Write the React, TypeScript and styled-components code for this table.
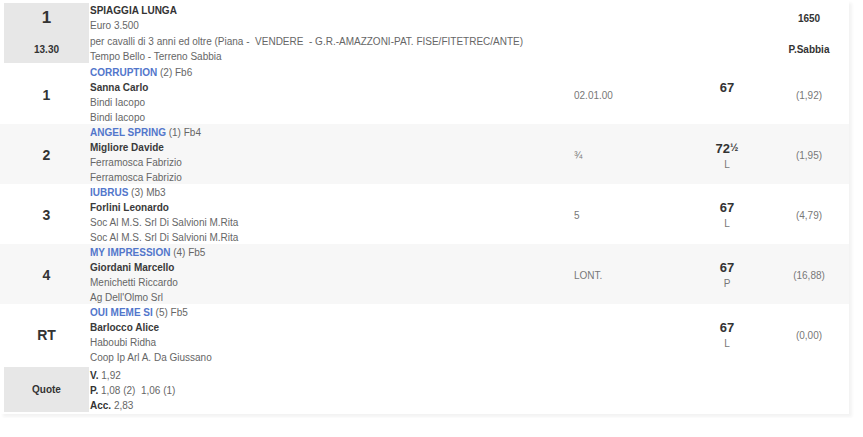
import styled, { createGlobalStyle } from "styled-components";

type Runner = {
    pos: string;
    horse: string;
    draw: number;
    stable: string;
    jockey: string;
    trainer: string;
    owner: string;
    gap: string;
    weight: string;
    half?: boolean;
    tag?: string;
    odds: string;
};

const runners: Runner[] = [
    { pos: "1", horse: "CORRUPTION", draw: 2, stable: "Fb6", jockey: "Sanna Carlo", trainer: "Bindi Iacopo", owner: "Bindi Iacopo", gap: "02.01.00", weight: "67", odds: "(1,92)" },
    { pos: "2", horse: "ANGEL SPRING", draw: 1, stable: "Fb4", jockey: "Migliore Davide", trainer: "Ferramosca Fabrizio", owner: "Ferramosca Fabrizio", gap: "¾", weight: "72", half: true, tag: "L", odds: "(1,95)" },
    { pos: "3", horse: "IUBRUS", draw: 3, stable: "Mb3", jockey: "Forlini Leonardo", trainer: "Soc Al M.S. Srl Di Salvioni M.Rita", owner: "Soc Al M.S. Srl Di Salvioni M.Rita", gap: "5", weight: "67", tag: "L", odds: "(4,79)" },
    { pos: "4", horse: "MY IMPRESSION", draw: 4, stable: "Fb5", jockey: "Giordani Marcello", trainer: "Menichetti Riccardo", owner: "Ag Dell'Olmo Srl", gap: "LONT.", weight: "67", tag: "P", odds: "(16,88)" },
    { pos: "RT", horse: "OUI MEME SI", draw: 5, stable: "Fb5", jockey: "Barlocco Alice", trainer: "Haboubi Ridha", owner: "Coop Ip Arl A. Da Giussano", gap: "", weight: "67", tag: "L", odds: "(0,00)" },
];

const GlobalStyle = createGlobalStyle`
    body {
        margin: 0;
        background: #fff;
        font-family: "Liberation Sans", Arial, sans-serif;
    }
`;

const Board = styled.div`
    width: 849px;
    background: #fff;
    box-shadow: 3px 3px 3px rgba(0, 0, 0, 0.05);
    margin-bottom: 4px;
`;

const Row = styled.div<{ $shade?: boolean }>`
    display: grid;
    grid-template-columns: 85px 485px 110px 86px 78px;
    padding-left: 4px;
    background: ${props => (props.$shade ? "#f7f7f7" : "#fff")};
`;

const HeadRow = styled(Row)`
    height: 64px;
    padding-top: 3px;
    box-sizing: border-box;
`;

const RunnerRow = styled(Row)`
    height: 60px;
    padding-top: 1px;
    box-sizing: border-box;
`;

const QuoteRow = styled(Row)`
    height: 50px;
    padding-top: 3px;
    box-sizing: border-box;
`;

const Stack = styled.div<{ $grey?: boolean }>`
    background: ${props => (props.$grey ? "#e7e7e7" : "transparent")};
    display: flex;
    flex-direction: column;
    align-items: center;
    padding-top: 10px;
    gap: 19px;
    margin-bottom: 1px;
`;

const QuoteCell = styled.div`
    background: #e7e7e7;
    display: flex;
    align-items: center;
    justify-content: center;
    margin-bottom: 2px;
`;

const Big = styled.div<{ $size: number }>`
    font-size: ${props => props.$size}px;
    font-weight: bold;
    color: #333;
`;

const HeadNum = styled.div`
    font-size: 17px;
    font-weight: bold;
    color: #333;
    line-height: 20px;
    margin: -5px 0 -3px;
`;

const Small = styled.div`
    font-size: 10px;
    line-height: 12px;
    font-weight: bold;
    color: #333;
`;

const Lines = styled.div`
    font-size: 10px;
    line-height: 15px;
    color: #666;
    padding-left: 1px;
    white-space: nowrap;
`;

const HeadLines = styled(Lines)`
    grid-column: 2 / 5;
    line-height: 15.3px;
`;

const QuoteLines = styled(Lines)`
    padding-top: 1px;
`;

const Title = styled.div`
    font-weight: bold;
    color: #333;
`;

const Horse = styled.span`
    color: #5276cb;
    font-weight: bold;
`;

const Strong = styled.div`
    font-weight: bold;
    color: #3a3a3a;
`;

const Label = styled.b`
    color: #333;
`;

const PosCell = styled.div`
    display: flex;
    align-items: center;
    justify-content: center;
`;

const GapCell = styled.div`
    display: flex;
    align-items: center;
    font-size: 10px;
    color: #777;
`;

const WeightCell = styled.div`
    display: flex;
    flex-direction: column;
    align-items: center;
    padding-top: 15px;
`;

const Weight = styled.div`
    font-size: 13px;
    font-weight: bold;
    color: #333;
    line-height: 16px;

    sup {
        font-size: 10px;
        vertical-align: 2px;
    }
`;

const Tag = styled.div`
    font-size: 10px;
    color: #777;
    line-height: 16px;
`;

const OddsCell = styled.div`
    display: flex;
    align-items: center;
    justify-content: center;
    font-size: 10px;
    color: #777;
`;

function App() {
    return (
        <>
            <GlobalStyle />
            <Board>
                <HeadRow>
                    <Stack $grey>
                        <HeadNum>1</HeadNum>
                        <Small>13.30</Small>
                    </Stack>
                    <HeadLines>
                        <Title>SPIAGGIA LUNGA</Title>
                        <div>Euro 3.500</div>
                        <div>per cavalli di 3 anni ed oltre (Piana - &nbsp;VENDERE &nbsp;- G.R.-AMAZZONI-PAT. FISE/FITETREC/ANTE)</div>
                        <div>Tempo Bello - Terreno Sabbia</div>
                    </HeadLines>
                    <Stack>
                        <Small>1650</Small>
                        <Small>P.Sabbia</Small>
                    </Stack>
                </HeadRow>
                {runners.map((r, i) => (
                    <RunnerRow key={r.horse} $shade={i % 2 === 1}>
                        <PosCell>
                            <Big $size={14}>{r.pos}</Big>
                        </PosCell>
                        <Lines>
                            <div>
                                <Horse>{r.horse}</Horse> ({r.draw}) {r.stable}
                            </div>
                            <Strong>{r.jockey}</Strong>
                            <div>{r.trainer}</div>
                            <div>{r.owner}</div>
                        </Lines>
                        <GapCell>{r.gap}</GapCell>
                        <WeightCell>
                            <Weight>
                                {r.weight}
                                {r.half && <sup>½</sup>}
                            </Weight>
                            {r.tag && <Tag>{r.tag}</Tag>}
                        </WeightCell>
                        <OddsCell>{r.odds}</OddsCell>
                    </RunnerRow>
                ))}
                <QuoteRow>
                    <QuoteCell>
                        <Small>Quote</Small>
                    </QuoteCell>
                    <QuoteLines>
                        <div>
                            <Label>V.</Label> 1,92
                        </div>
                        <div>
                            <Label>P.</Label> 1,08 (2) &nbsp;1,06 (1)
                        </div>
                        <div>
                            <Label>Acc.</Label> 2,83
                        </div>
                    </QuoteLines>
                </QuoteRow>
            </Board>
        </>
    );
}

export default App;
